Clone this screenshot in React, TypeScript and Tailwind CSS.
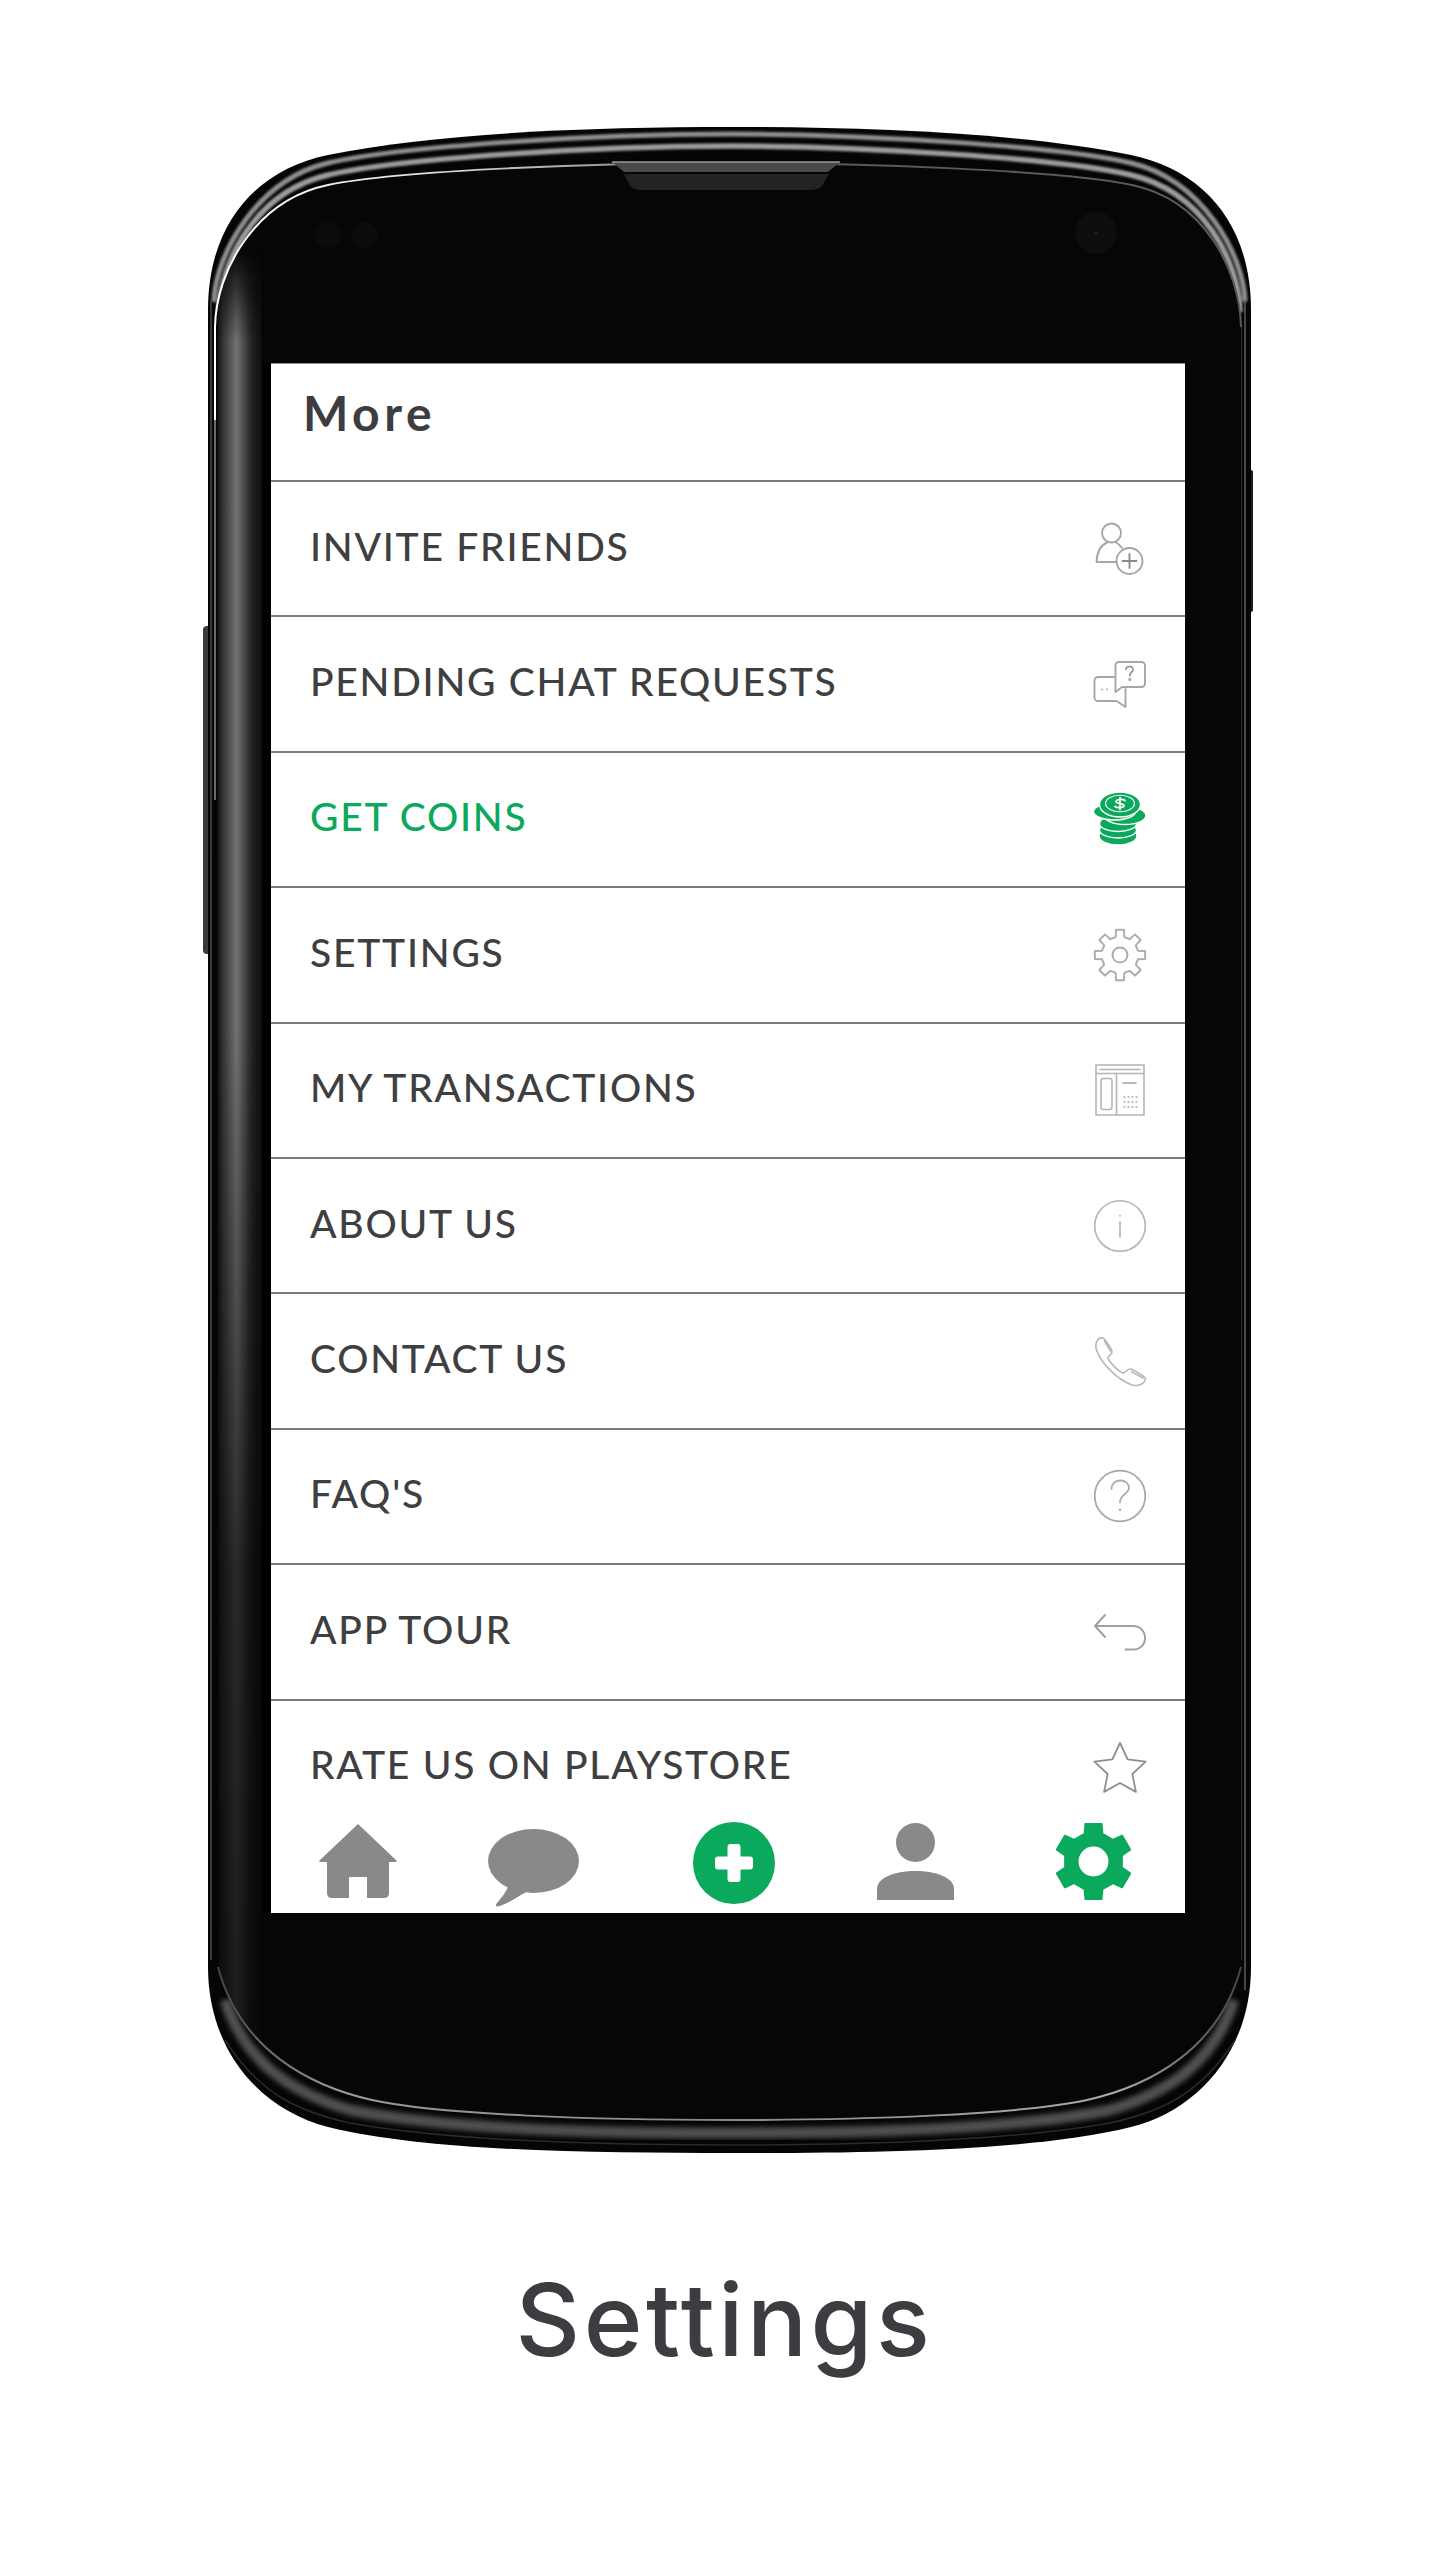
import React from "react";

const GREEN = "#0aa95c";
const NAV = "#88898b";

function gearPath(cx: number, cy: number, rOut: number, rRoot: number, teeth: number, start: number) {
  const pts: string[] = [];
  const step = (Math.PI * 2) / teeth;
  for (let i = 0; i < teeth; i++) {
    const a = start + i * step;
    const at = (r: number, d: number) =>
      `${(cx + r * Math.cos(a + d)).toFixed(2)} ${(cy + r * Math.sin(a + d)).toFixed(2)}`;
    pts.push(`${i === 0 ? "M" : "L"}${at(rRoot, -step * 0.3)}`);
    pts.push(`L${at(rOut, -step * 0.2)}`);
    pts.push(`L${at(rOut, step * 0.2)}`);
    pts.push(`L${at(rRoot, step * 0.3)}`);
  }
  return pts.join(" ") + " Z";
}

const Box = ({ children }: { children: React.ReactNode }) => (
  <svg viewBox="0 0 60 60" className="w-[60px] h-[60px] shrink-0" fill="none" strokeLinecap="round" strokeLinejoin="round">
    {children}
  </svg>
);

const InviteIcon = () => (
  <Box>
    <g stroke="#a6a6a6" strokeWidth="1.900">
      <circle cx="21.5" cy="14" r="9.5" />
      <path d="M17 23.5C11 26 7 33 6.5 43H26" />
      <path d="M26 23.5C28 24.5 30 26 32 29" />
      <circle cx="39.5" cy="42" r="13" />
      <path d="M39.5 35V49M32.5 42H46.5" stroke="#8a8a8a" />
    </g>
  </Box>
);

const ChatIcon = () => (
  <Box>
    <g stroke="#a6a6a6" strokeWidth="1.900">
      <path d="M24 23H8a3.5 3.5 0 0 0-3.5 3.500V43.500A3.500 3.500 0 0 0 8 47H26.500L35.500 53V35" />
      <path d="M29 8H51.500A3.500 3.500 0 0 1 55 11.500V29.500A3.500 3.500 0 0 1 51.500 33H32L25.500 38V11.500A3.500 3.500 0 0 1 29 8Z" />
      <path d="M36 15.500C36 13.500 37.500 12.500 39.500 12.500C41.500 12.500 43 13.800 43 15.500C43 18 39.800 18.500 39.800 21.800" strokeWidth="1.600" stroke="#8f8f8f" />
      <circle cx="39.800" cy="25.500" r="0.5" stroke="#8f8f8f" />
      <path d="M12 35.500H12.300M17 35.500H17.300" stroke="#b5b5b5" />
    </g>
  </Box>
);

const CoinsIcon = () => (
  <Box>
    <g fill={GREEN} stroke="#ffffff" strokeWidth="1.400">
      <ellipse cx="28" cy="47" rx="19" ry="9" />
      <ellipse cx="28" cy="41" rx="18.500" ry="8" />
      <ellipse cx="28" cy="34.500" rx="18.500" ry="8" />
      <ellipse cx="35" cy="26.500" rx="21" ry="9" />
      <ellipse cx="24.500" cy="22.500" rx="21" ry="8.500" />
      <ellipse cx="30" cy="15.500" rx="20.500" ry="12.500" />
      <ellipse cx="30" cy="14.500" rx="15" ry="8.800" fill="#ffffff" stroke="none" />
      <ellipse cx="30" cy="14.500" rx="13.800" ry="7.700" fill={GREEN} stroke="none" />
    </g>
    <path d="M35 11.500C33 10 26.500 10 26 12.500C25.500 15 34.500 14 34 16.800C33.500 19 27 19 25 17.500M30 8.500V20.500" stroke="#ffffff" strokeWidth="1.700" />
  </Box>
);

const GearOutline = () => (
  <Box>
    <path d={gearPath(30, 30, 25.5, 18.5, 8, -Math.PI / 2)} stroke="#ababab" strokeWidth="1.900" />
    <circle cx="30" cy="30" r="7.500" stroke="#ababab" strokeWidth="1.900" />
  </Box>
);

const LedgerIcon = () => (
  <Box>
    <g stroke="#b4b4b4" strokeWidth="1.600">
      <rect x="6" y="5" width="48" height="50" />
      <path d="M10 9.500H50" />
      <path d="M6 13.500H54" />
      <path d="M26.500 13.500V55" />
      <rect x="11" y="18.500" width="11" height="31" rx="2.500" />
      <path d="M33 23H46" stroke="#a0a0a0" />
    </g>
    <g fill="#c0c0c0">
      {[36, 41, 46].map((y) =>
        [33.5, 37.5, 41.5, 45.5].map((x) => <rect key={`${x}-${y}`} x={x} y={y} width="2" height="2" />)
      )}
    </g>
  </Box>
);

const InfoIcon = () => (
  <Box>
    <circle cx="30" cy="30" r="25.300" stroke="#b4b4b4" strokeWidth="1.600" />
    <path d="M30 19.500V19.800M30 26V40.500" stroke="#bcbcbc" strokeWidth="1.800" />
  </Box>
);

const PhoneIcon = () => (
  <Box>
    <g stroke="#b8b8b8" strokeWidth="1.600">
      <path d="M13 7C9 6 5 10 6 17C9 30 26 48 42 54C49 56 55 52 55.500 48C55.500 46 43 38 40 38C38 38 35 42 33 42C29 41 19 31 18 27C18 25 22 23 22 21C22 18 15 8 13 7Z" />
      <path d="M14.500 10L20.500 20M41.500 40.500L53 47" />
    </g>
  </Box>
);

const QuestionIcon = () => (
  <Box>
    <circle cx="30" cy="30" r="25.300" stroke="#a8a8a8" strokeWidth="1.800" />
    <path d="M21.500 23C21.500 17.500 25.500 14.500 30.500 14.500C35.500 14.500 39 17.500 39 22C39 27.500 30 28.500 30 36.500" stroke="#adadad" strokeWidth="1.800" />
    <path d="M30 43.500V44" stroke="#adadad" strokeWidth="2.200" />
  </Box>
);

const BackIcon = () => (
  <Box>
    <path d="M15 13L5 24L15 35M5 24H43C50 24 55 29 55 36C55 43 50 47.500 43 47.500H35.500" stroke="#a0a0a0" strokeWidth="2" />
  </Box>
);

const StarIcon = () => {
  const pts: string[] = [];
  for (let i = 0; i < 10; i++) {
    const a = -Math.PI / 2 + (i * Math.PI) / 5;
    const r = i % 2 === 0 ? 27 : 13;
    pts.push(`${(30 + r * Math.cos(a)).toFixed(2)},${(33 + r * Math.sin(a)).toFixed(2)}`);
  }
  return (
    <Box>
      <polygon points={pts.join(" ")} stroke="#8e8e8e" strokeWidth="1.800" />
    </Box>
  );
};

const rows: { label: string; icon: React.ReactNode; active?: boolean }[] = [
  { label: "INVITE FRIENDS", icon: <InviteIcon /> },
  { label: "PENDING CHAT REQUESTS", icon: <ChatIcon /> },
  { label: "GET COINS", icon: <CoinsIcon />, active: true },
  { label: "SETTINGS", icon: <GearOutline /> },
  { label: "MY TRANSACTIONS", icon: <LedgerIcon /> },
  { label: "ABOUT US", icon: <InfoIcon /> },
  { label: "CONTACT US", icon: <PhoneIcon /> },
  { label: "FAQ'S", icon: <QuestionIcon /> },
  { label: "APP TOUR", icon: <BackIcon /> },
  { label: "RATE US ON PLAYSTORE", icon: <StarIcon /> },
];

const FACE =
  "M215 327C216 270 256 200 328 185C400 170 600 163 730 163C860 163 1060 170 1132 185C1204 200 1240 270 1241 327L1241 1967C1219 2050 1149 2086 1087 2100C1017 2115 860 2120 730 2120C600 2120 440 2115 372 2100C310 2086 240 2050 218 1967Z";

const PhoneShell = () => (
  <svg viewBox="200 117 1060 2046" className="absolute inset-0 w-full h-full">
    <defs>
      <linearGradient id="band" x1="218" x2="262" y1="0" y2="0" gradientUnits="userSpaceOnUse">
        <stop offset="0" stopColor="#1a1a1a" />
        <stop offset="0.15" stopColor="#3c3c3c" />
        <stop offset="0.42" stopColor="#747474" />
        <stop offset="0.75" stopColor="#262626" />
        <stop offset="1" stopColor="#0c0c0c" />
      </linearGradient>
      <linearGradient id="bandFade" x1="0" x2="0" y1="250" y2="2090" gradientUnits="userSpaceOnUse">
        <stop offset="0" stopColor="#000" />
        <stop offset="0.05" stopColor="#fff" />
        <stop offset="0.42" stopColor="#fff" />
        <stop offset="0.72" stopColor="#555" />
        <stop offset="1" stopColor="#333" />
      </linearGradient>
      <mask id="bandMask" maskUnits="userSpaceOnUse" x="200" y="117" width="1060" height="2046">
        <rect x="200" y="117" width="1060" height="2046" fill="url(#bandFade)" />
      </mask>
      <clipPath id="faceClip">
        <path d={FACE} />
      </clipPath>
      <linearGradient id="topLine" x1="215" x2="800" y1="0" y2="0" gradientUnits="userSpaceOnUse">
        <stop offset="0" stopColor="#ffffff" />
        <stop offset="0.35" stopColor="#e0e0e0" />
        <stop offset="0.75" stopColor="#8a8a8a" />
        <stop offset="1" stopColor="#5a5a5a" />
      </linearGradient>
      <linearGradient id="bottomLine" x1="215" x2="1241" y1="0" y2="0" gradientUnits="userSpaceOnUse">
        <stop offset="0" stopColor="#444444" />
        <stop offset="0.12" stopColor="#9a9a9a" />
        <stop offset="0.5" stopColor="#8a8a8a" />
        <stop offset="0.88" stopColor="#aaaaaa" />
        <stop offset="1" stopColor="#444444" />
      </linearGradient>
      <filter id="soft" x="-5%" y="-5%" width="110%" height="110%">
        <feGaussianBlur stdDeviation="1.200" />
      </filter>
      <filter id="softer" x="-5%" y="-5%" width="110%" height="110%">
        <feGaussianBlur stdDeviation="2.500" />
      </filter>
    </defs>

    {/* side buttons */}
    <rect x="203" y="626" width="10" height="328" rx="4" fill="#3a3a3a" />
    <rect x="1248" y="470" width="5" height="142" rx="2" fill="#1c1c1c" />

    {/* body */}
    <path
      d="M208 310C208 225 255 170 328 155C440 132 600 127 730 127C860 127 1019 132 1131 155C1204 170 1251 225 1251 310L1251 1967C1251 2050 1199 2110 1131 2127C1029 2152 860 2153 730 2153C600 2153 430 2152 328 2127C260 2110 208 2050 208 1967Z"
      fill="#050505"
    />

    {/* rim stripes */}
    <g fill="none" filter="url(#soft)" strokeLinecap="round">
      <path
        d="M214 300C216 255 256 180 328 163C400 146 600 134 730 134C860 134 1059 146 1131 163C1203 180 1243 255 1245 300"
        stroke="#8e8e8e"
        strokeWidth="5"
      />
      <path
        d="M219 310C221 262 255 192 328 175C400 158 600 146 730 146C860 146 1059 158 1131 175C1204 192 1238 262 1240 310"
        stroke="#9c9c9c"
        strokeWidth="5.500"
      />
    </g>
    <g fill="none" stroke="#5c5c5c" strokeWidth="1.500">
      <path d="M1245 300V1990" />
      <path d="M1241 327V1960" stroke="#3c3c3c" />
      <path d="M211 300V1960" stroke="#4a4a4a" />
    </g>

    {/* bottom rim */}
    <path
      d="M225 2000C245 2062 290 2092 350 2110C450 2130 600 2133 730 2133C860 2133 1010 2130 1110 2110C1170 2092 1214 2062 1234 2000"
      fill="none"
      stroke="#505050"
      strokeWidth="11"
      filter="url(#softer)"
    />
    <path
      d="M225 2040C260 2095 300 2112 350 2123C450 2141 600 2145 730 2145C860 2145 1010 2141 1110 2123C1160 2112 1200 2095 1235 2040"
      fill="none"
      stroke="#2a2a2a"
      strokeWidth="1.500"
    />

    {/* face */}
    <path d={FACE} fill="#060606" />
    <g clipPath="url(#faceClip)">
      <rect x="218" y="200" width="44" height="1950" fill="url(#band)" mask="url(#bandMask)" filter="url(#soft)" />
    </g>

    {/* face outline */}
    <path
      d="M215 420V327C216 270 256 200 328 185C400 170 600 163 730 163C860 163 1060 170 1132 185C1204 200 1240 270 1241 327"
      fill="none"
      stroke="url(#topLine)"
      strokeWidth="2"
    />
    <path d="M215 420V800" stroke="#8a8a8a" strokeWidth="1.500" fill="none" />
    <path
      d="M218 1967C240 2050 310 2086 372 2100C440 2115 600 2120 730 2120C860 2120 1017 2115 1087 2100C1149 2086 1219 2050 1241 1967"
      fill="none"
      stroke="url(#bottomLine)"
      strokeWidth="2"
    />

    {/* earpiece */}
    <path d="M612 162H840L828 172H624Z" fill="#4a4a4a" />
    <path d="M612 162H840" stroke="#9a9a9a" strokeWidth="1.500" />
    <path d="M624 174H829L822 186Q818 190 810 190H642Q634 190 630 186Z" fill="#232323" />

    {/* camera and sensors */}
    <circle cx="328" cy="235" r="13" fill="#0b0b0b" />
    <circle cx="365" cy="235" r="13" fill="#0c0c0c" />
    <circle cx="1096" cy="233" r="21" fill="#0e0e0e" />
    <circle cx="1096" cy="233" r="2" fill="#1f1f1f" />
  </svg>
);

export default function App() {
  return (
    <div className="w-[1440px] h-[2560px] bg-white flex flex-col">
      <div className="relative w-[1060px] h-[2046px] ml-[200px] mt-[117px] pt-[246px] pl-[62px]">
        <PhoneShell />
        <div className="relative w-[923px] h-[1550px] border-l-[9px] border-black">
          <div className="w-[914px] h-[1550px] bg-white flex flex-col overflow-hidden border-t border-[#8a8a8a]">
            <div className="flex-1 min-h-0 overflow-hidden">
              <div className="h-[118px] border-b-2 border-[#7d7d7d] pl-[32px] pt-[20px]">
                <span className="font-['Lato',sans-serif] font-bold text-[48px] leading-[58px] tracking-[4.500px] text-[#3d3d3f]">
                  More
                </span>
              </div>
              {rows.map((r) => (
                <div
                  key={r.label}
                  className="h-[135.4px] border-b-2 border-[#7d7d7d] flex items-center justify-between pl-[39px] pr-[35px]"
                >
                  <span
                    className={`block pb-[6px] font-['Lato',sans-serif] font-medium text-[39px] leading-[48px] tracking-[1.750px] ${
                      r.active ? "text-[#0aa95c]" : "text-[#3f3f41]"
                    }`}
                  >
                    {r.label}
                  </span>
                  {r.icon}
                </div>
              ))}
            </div>
            <nav className="h-[98px] shrink-0 flex items-start bg-white pl-[48px]">
              <svg viewBox="0 0 78 74" className="w-[78px] h-[74px] mt-[9px] shrink-0">
                <path
                  d="M39 0L77 36Q79 38 76 38H70V69Q70 74 65 74H48V53H30V74H13Q8 74 8 69V38H2Q-1 38 1 36Z"
                  fill={NAV}
                />
              </svg>
              <svg viewBox="0 0 91 78" className="w-[91px] h-[78px] mt-[14px] ml-[91px] shrink-0">
                <ellipse cx="45.500" cy="32" rx="45.500" ry="32" fill={NAV} />
                <path d="M21 55C18 65 10 72 8 75.500Q7.500 78 10 77.500C22 74 32 66 40 62Z" fill={NAV} />
              </svg>
              <svg viewBox="0 0 82 82" className="w-[82px] h-[82px] mt-[7px] ml-[114px] shrink-0">
                <circle cx="41" cy="41" r="41" fill={GREEN} />
                <path
                  d="M34.500 25Q34.500 22 37.500 22H44.500Q47.500 22 47.500 25V34.500H57Q60 34.500 60 37.500V44.500Q60 47.500 57 47.500H47.500V57Q47.500 60 44.500 60H37.500Q34.500 60 34.500 57V47.500H25Q22 47.500 22 44.500V37.500Q22 34.500 25 34.500H34.500Z"
                  fill="#ffffff"
                />
              </svg>
              <svg viewBox="0 0 77 77" className="w-[77px] h-[77px] mt-[8px] ml-[102px] shrink-0">
                <circle cx="38.500" cy="19.500" r="19.500" fill={NAV} />
                <path d="M0 77V66C0 55 17 48 38.500 48C60 48 77 55 77 66V77Z" fill={NAV} />
              </svg>
              <svg viewBox="0 0 77 77" className="w-[77px] h-[77px] mt-[8px] ml-[101px] shrink-0">
                <path
                  fillRule="evenodd"
                  d={gearPath(38.5, 38.5, 38.5, 29, 6, -Math.PI / 2) + " M54.500 38.500A16 16 0 1 0 22.500 38.500A16 16 0 1 0 54.500 38.500Z"}
                  fill={GREEN}
                  stroke={GREEN}
                  strokeWidth="2"
                  strokeLinejoin="round"
                />
              </svg>
            </nav>
          </div>
        </div>
      </div>
      <div className="mt-[97px] pl-[9px] text-center font-['Inter',sans-serif] font-medium text-[100px] leading-[120px] tracking-[3.500px] text-[#3c3d41]">
        Settings
      </div>
    </div>
  );
}
